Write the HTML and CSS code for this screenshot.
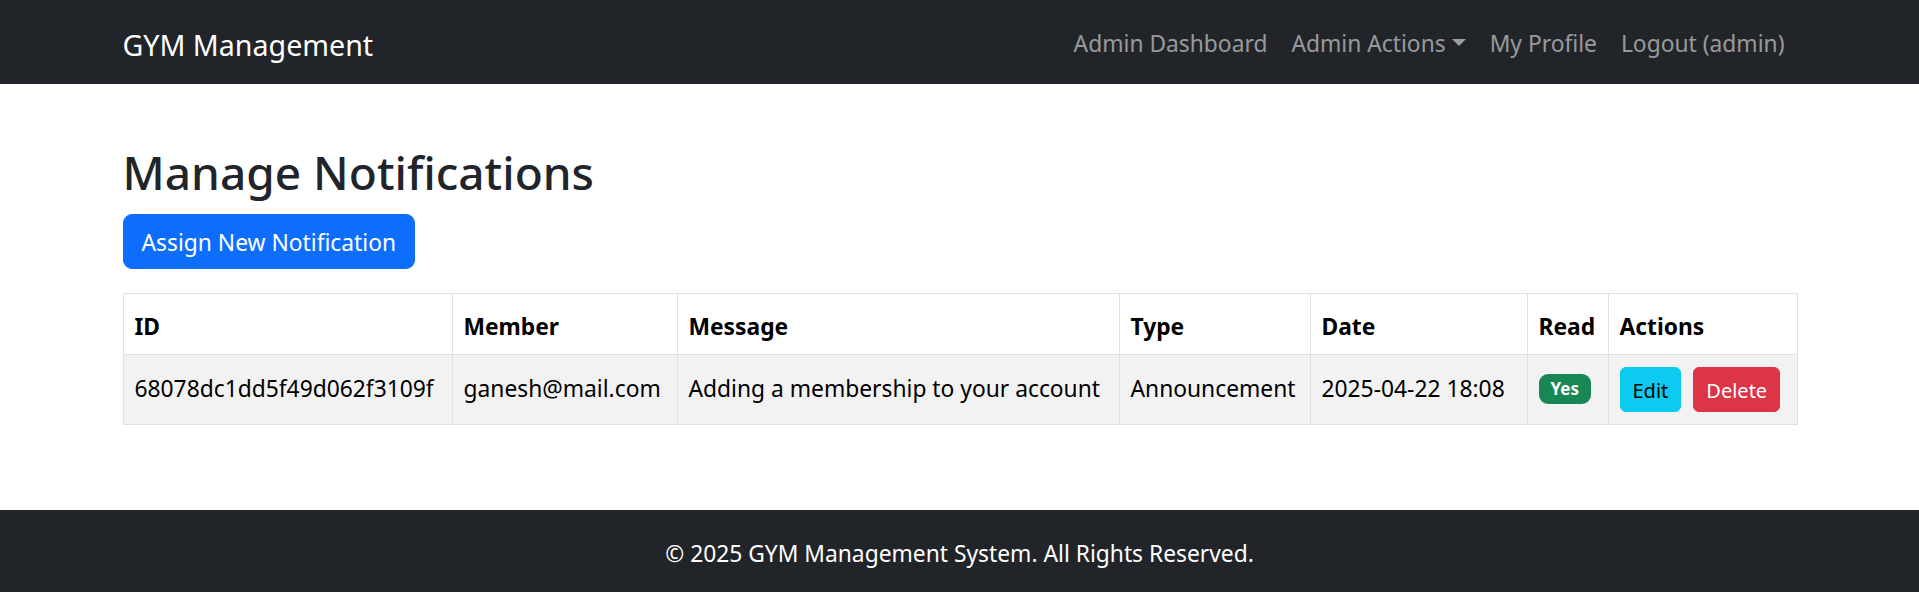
FILE: index.html
```html
<!DOCTYPE html>
<html lang="en">
<head>
<meta charset="utf-8">
<title>Manage Notifications</title>
<link rel="stylesheet" href="styles.css">
</head>
<body>
<nav class="navbar">
  <div class="container nav-inner">
    <a class="brand" href="#">GYM Management</a>
    <ul class="nav-links">
      <li><a href="#">Admin Dashboard</a></li>
      <li><a href="#" class="dropdown-toggle">Admin Actions</a></li>
      <li><a href="#">My Profile</a></li>
      <li><a href="#">Logout (admin)</a></li>
    </ul>
  </div>
</nav>
<main class="container main">
  <h1 class="title">Manage Notifications</h1>
  <a href="#" class="btn btn-primary">Assign New Notification</a>
  <table class="table">
    <colgroup>
      <col class="c-id"><col class="c-member"><col class="c-message"><col class="c-type"><col class="c-date"><col class="c-read"><col class="c-actions">
    </colgroup>
    <thead>
      <tr><th>ID</th><th>Member</th><th>Message</th><th>Type</th><th>Date</th><th>Read</th><th>Actions</th></tr>
    </thead>
    <tbody>
      <tr>
        <td>68078dc1dd5f49d062f3109f</td>
        <td>ganesh@mail.com</td>
        <td>Adding a membership to your account</td>
        <td>Announcement</td>
        <td>2025-04-22 18:08</td>
        <td><span class="badge">Yes</span></td>
        <td class="actions"><a href="#" class="btn-sm btn-info">Edit</a><button class="btn-sm btn-danger">Delete</button></td>
      </tr>
    </tbody>
  </table>
</main>
<footer class="footer">
  <p>© 2025 GYM Management System. All Rights Reserved.</p>
</footer>
</body>
</html>
```

FILE: styles.css
```css
* { box-sizing: border-box; }
html { margin: 0; padding: 0; background: #212529; }
body {
  margin: 0;
  padding: 0;
  font-family: "Noto Sans", "Open Sans", sans-serif;
  font-size: 22.8px;
  line-height: 36px;
  color: #212529;
  background: #fff;
}
a { text-decoration: none; }

.container {
  max-width: 1710px;
  margin: 0 auto;
  padding: 0 18px;
}

/* navbar */
.navbar {
  background: #212529;
  height: 84px;
}
.nav-inner {
  height: 84px;
  display: flex;
  align-items: center;
  justify-content: space-between;
  padding-top: 4px;
}
.brand {
  color: #fff;
  font-size: 28.6px;
  line-height: 45px;
  padding: 7.5px 0;
}
.nav-links {
  list-style: none;
  margin: 0;
  padding: 0;
  display: flex;
}
.nav-links a {
  display: block;
  padding: 12px;
  color: rgba(255, 255, 255, 0.55);
  font-size: 22.8px;
  line-height: 36px;
}
.dropdown-toggle::after {
  content: "";
  display: inline-block;
  margin-left: 6px;
  vertical-align: 6px;
  border-top: 7px solid;
  border-right: 7px solid transparent;
  border-left: 7px solid transparent;
  border-bottom: 0;
}

/* main */
.main {
  padding-top: 60px;
}
.title {
  margin: 0 0 12px;
  font-size: 46px;
  font-weight: 500;
  line-height: 57.6px;
  color: #212529;
}
.btn {
  display: inline-block;
  font-size: 22.8px;
  line-height: 35px;
  padding: 10px 18px 8px;
  border: 1.5px solid transparent;
  border-radius: 9px;
}
.btn-primary {
  background: #0d6efd;
  border-color: #0d6efd;
  color: #fff;
}

.table {
  width: 100%;
  margin-top: 24px;
  margin-bottom: 85px;
  border-collapse: collapse;
  table-layout: fixed;
  color: #000;
}
.c-id { width: 329px; }
.c-member { width: 225px; }
.c-message { width: 442px; }
.c-type { width: 191px; }
.c-date { width: 217px; }
.c-read { width: 81px; }
.c-actions { width: 189px; }

.table th, .table td {
  border: 1px solid #dee2e6;
  padding: 12px 11px;
  text-align: left;
  vertical-align: middle;
  white-space: nowrap;
  line-height: 36px;
}
.table th {
  font-weight: 700;
  background: #fff;
  padding-top: 15px;
  padding-bottom: 9px;
}
.table tbody td {
  background: #f2f2f2;
}
.badge {
  display: inline-block;
  font-size: 17px;
  font-weight: 700;
  line-height: 18px;
  padding: 6px 12px;
  color: #fff;
  background: #198754;
  border-radius: 9px;
  vertical-align: middle;
  position: relative;
  top: -2px;
}
.actions {
  font-size: 0;
}
.btn-sm {
  display: inline-block;
  font-family: inherit;
  font-size: 20px;
  line-height: 31.5px;
  padding: 7px 12px 5px;
  border: 1.5px solid transparent;
  border-radius: 6px;
  vertical-align: middle;
  cursor: pointer;
}
.btn-info {
  background: #0dcaf0;
  border-color: #0dcaf0;
  color: #000;
  margin-right: 12px;
}
.btn-danger {
  background: #dc3545;
  border-color: #dc3545;
  color: #fff;
}

/* footer */
.footer {
  background: #212529;
  color: #fff;
  text-align: center;
  padding: 26px 0 18px;
}
.footer p {
  margin: 0;
  line-height: 36px;
}
```
